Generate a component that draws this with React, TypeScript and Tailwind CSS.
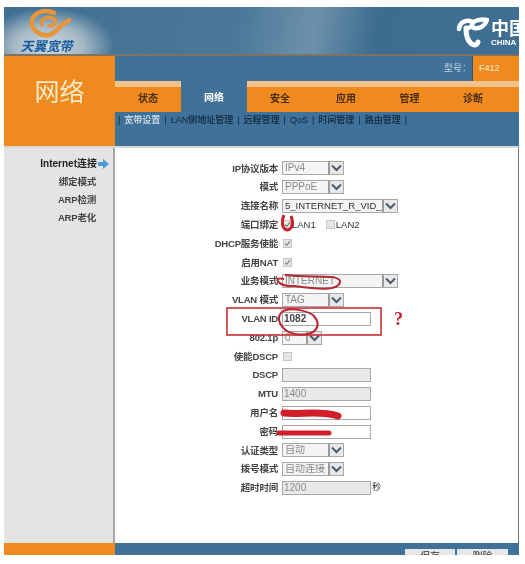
const tabs = ['状态', '网络', '安全', '应用', '管理', '诊断']
const links = ['宽带设置', 'LAN侧地址管理', '远程管理', 'QoS', '时间管理', '路由管理']

function Chevron() {
  return (
    <span className="flex h-full w-[15px] shrink-0 items-center justify-center border-l-2 border-[#9a9a9a] bg-[#e8e8e8]">
      <svg width="11" height="8" viewBox="0 0 11 8" fill="none">
        <path d="M1 1.5 5.5 6 10 1.5" stroke="#4a5a68" strokeWidth="2" />
      </svg>
    </span>
  )
}

function Select({ value, width, muted = true, small = false }: { value: string; width: string; muted?: boolean; small?: boolean }) {
  return (
    <div className={`flex h-[14px] items-center overflow-hidden border border-[#a8a8a8] bg-[#f4f4f4] ${width}`}>
      <span className={`flex-1 overflow-hidden pl-[2px] leading-none whitespace-nowrap ${small ? 'text-[9.5px]' : 'text-[10px]'} ${muted ? 'text-[#8a8a8a]' : 'text-[#333]'}`}>
        {value}
      </span>
      <Chevron />
    </div>
  )
}

function Input({ value = '', disabled = false, dark = false }: { value?: string; disabled?: boolean; dark?: boolean }) {
  return (
    <div className={`flex h-[14px] w-[89px] items-center border border-[#a8a8a8] pl-[1px] text-[10px] leading-none ${disabled ? 'bg-[#e9e9e9]' : 'bg-white'} ${dark ? 'font-bold text-[#444]' : 'text-[#8a8a8a]'}`}>
      {value}
    </div>
  )
}

function Check({ checked = true }: { checked?: boolean }) {
  return (
    <span className="flex h-[9px] w-[9px] shrink-0 items-center justify-center border border-[#c4c4c4] bg-[#e6e6e6]">
      {checked && (
        <svg width="9" height="9" viewBox="0 0 9 9" fill="none">
          <path d="M1.5 4.5 3.6 7 7.6 1.5" stroke="#6d7478" strokeWidth="1.3" />
        </svg>
      )}
    </span>
  )
}

function Row({ label, children }: { label: string; children: React.ReactNode }) {
  return (
    <div className="flex h-[18.8px] items-center">
      <div className="w-[174px] pr-[4px] text-right text-[9.5px] leading-none font-bold tracking-[-0.2px] whitespace-nowrap text-[#444]">
        {label}
      </div>
      <div className="flex items-center">{children}</div>
    </div>
  )
}

function Logo() {
  return (
    <div className="flex h-full w-[111px] flex-col items-center bg-[radial-gradient(ellipse_at_40%_85%,#cfdae0_0%,#a3b7c4_38%,transparent_70%)] pt-[2px] pr-[26px]">
      <svg className="ml-[6px]" width="42" height="29" viewBox="0 0 42 29" fill="none">
        <path
          d="M25 4C18 0 6 2 3 11 1 20 11 28 20 26 29 24 30 15 41 11"
          stroke="#e8943a"
          strokeWidth="4.5"
          strokeLinecap="round"
        />
        <path
          d="M13 16C11 10 18 7 24 9 29 11 27 17 20 17"
          stroke="#e8943a"
          strokeWidth="3.5"
          strokeLinecap="round"
        />
      </svg>
      <span className="mt-[2px] text-[13px] leading-[14px] font-bold whitespace-nowrap text-[#1a5c9e] italic">天翼宽带</span>
    </div>
  )
}

function TelecomMark() {
  return (
    <svg className="shrink-0" width="33" height="31" viewBox="0 0 33 31" fill="none" stroke="#fff" strokeLinecap="round">
      <path d="M3 12C3 6 9 3 14 4 18 5 17 10 12 11" strokeWidth="4.5" />
      <path d="M17 5C21 3 27 2 31 3 29 9 24 12 18 11" strokeWidth="4.5" />
      <path d="M10 11C10 19 12 26 18 28 20 28 22 27 22 25" strokeWidth="5" />
    </svg>
  )
}

export default function App() {
  return (
    <div className="relative h-[564px] w-[525px] overflow-hidden bg-white pt-[7px] pl-[4px] font-['Liberation_Sans','Noto_Sans_CJK_SC',sans-serif] blur-[0.4px]">
      <div className="flex h-[548px] w-[515px] flex-col">
        {/* top banner */}
        <div className="flex h-[49px] shrink-0 items-start justify-between overflow-hidden border-b-2 border-[#7d7360] bg-[linear-gradient(100deg,#3f6f93_0%,#4a7899_45%,#6d91ab_60%,#3c6c90_72%,#3f6f93_100%)]">
          <Logo />
          <div className="flex w-[63px] shrink-0 items-start gap-[2px] pt-[10px]">
            <TelecomMark />
            <div className="flex flex-col leading-none whitespace-nowrap text-white">
              <span className="mt-[3px] text-[18px] font-bold">中国</span>
              <span className="mt-[1px] text-[8px] font-bold">CHINA</span>
            </div>
          </div>
        </div>

        {/* orange title + tabs */}
        <div className="flex h-[90px] shrink-0">
          <div className="flex w-[111px] shrink-0 justify-center bg-[#ee8a1e] pt-[24px]">
            <span className="text-[25px] leading-none text-[#fcebca]">网络</span>
          </div>
          <div className="flex flex-1 flex-col bg-[#3f7199]">
            <div className="flex h-[25px] shrink-0 justify-end">
              <span className="self-center pt-[1px] pr-[1px] text-[9px] text-[#c4d3de]">型号：</span>
              <div className="flex w-[47px] items-center border-l border-[#2f5572] bg-[#ee8a1e] pl-[6px] text-[9px] font-bold text-[#f9d6a6]">
                F412
              </div>
            </div>
            <div className="flex h-[31px] shrink-0">
              {tabs.map((tab, i) => (
                <div
                  key={tab}
                  className={`flex h-full items-center justify-center pb-[3px] text-[10px] font-bold ${
                    i === 1
                      ? 'pt-[5px] text-white'
                      : 'border-t-[6px] border-[#f6c48a] bg-[#ee8a1e] text-[#4a2c10]'
                  } ${i === 5 ? 'w-[68px] flex-1 pr-[13px]' : i === 4 ? 'w-[61px]' : 'w-[66px]'}`}
                >
                  {tab}
                </div>
              ))}
            </div>
            <div className="flex h-[31px] items-start gap-[4px] pt-[1px] pl-[3px] text-[9px] leading-[14px] font-medium whitespace-nowrap text-[#10263a]">
              <span>|</span>
              {links.map((link, i) => (
                <span key={link} className="flex gap-[4px]">
                  <span className={i === 0 ? 'text-[#dbe5ec]' : ''}>{link}</span>
                  <span>|</span>
                </span>
              ))}
            </div>
          </div>
        </div>

        {/* body */}
        <div className="flex min-h-0 flex-1 border-t-2 border-r border-t-[#d8d8d8] border-r-[#6f7a82]">
          <div className="flex w-[111px] shrink-0 flex-col items-end border-r-2 border-[#a5a5a5] bg-[#e4e4e4] pt-[7px] pr-[4px] text-[9.5px] leading-[18px] font-bold tracking-[-0.2px] text-[#444]">
            <div className="flex items-center gap-[1px] text-[10px] tracking-normal text-[#222]">
              Internet连接
              <svg width="11" height="10" viewBox="0 0 11 10">
                <path d="M0 3H5V0L11 5 5 10V7H0Z" fill="#4d9bd6" />
              </svg>
            </div>
            <div className="pr-[13px]">绑定模式</div>
            <div className="pr-[13px]">ARP检测</div>
            <div className="pr-[13px]">ARP老化</div>
          </div>
          <div className="flex-1 bg-white pt-[11px]">
            <div className="-ml-[7px]">
              <Row label="IP协议版本"><Select value="IPv4" width="w-[62px]" /></Row>
              <Row label="模式"><Select value="PPPoE" width="w-[62px]" /></Row>
              <Row label="连接名称"><Select value="5_INTERNET_R_VID_1" width="w-[116px]" muted={false} small /></Row>
              <Row label="端口绑定">
                <span className="ml-[1px] flex"><Check /></span>
                <span className="text-[9.5px] text-[#333]">LAN1</span>
                <span className="ml-[10px] flex"><Check checked={false} /></span>
                <span className="ml-[1px] text-[9.5px] text-[#333]">LAN2</span>
              </Row>
              <Row label="DHCP服务使能"><span className="ml-[1px] flex"><Check /></span></Row>
              <Row label="启用NAT"><span className="ml-[1px] flex"><Check /></span></Row>
              <Row label="业务模式"><Select value="INTERNET" width="w-[116px]" /></Row>
              <Row label="VLAN 模式"><Select value="TAG" width="w-[62px]" /></Row>
              <Row label="VLAN ID"><Input value="1082" dark /></Row>
              <Row label="802.1p"><Select value="0" width="w-[40px]" /></Row>
              <Row label="使能DSCP"><span className="ml-[1px] flex"><Check checked={false} /></span></Row>
              <Row label="DSCP"><Input disabled /></Row>
              <Row label="MTU"><Input value="1400" disabled /></Row>
              <Row label="用户名"><Input /></Row>
              <Row label="密码"><Input /></Row>
              <Row label="认证类型"><Select value="自动" width="w-[62px]" /></Row>
              <Row label="拨号模式"><Select value="自动连接" width="w-[62px]" /></Row>
              <Row label="超时时间">
                <Input value="1200" disabled />
                <span className="ml-[1px] text-[9px] text-[#333]">秒</span>
              </Row>
            </div>
          </div>
        </div>

        {/* bottom bar, buttons run past the crop */}
        <div className="flex h-[12px] shrink-0 overflow-hidden">
          <div className="w-[111px] shrink-0 bg-[#ee8a1e]" />
          <div className="flex flex-1 justify-end gap-[2px] bg-[#3f7199] pt-[6px] pr-[11px]">
            <div className="h-[20px] w-[50px] bg-[#e6e9ec] text-center text-[10px] text-[#333]">保存</div>
            <div className="h-[20px] w-[51px] bg-[#e6e9ec] text-center text-[10px] text-[#333]">删除</div>
          </div>
        </div>
      </div>

      {/* red marks drawn over the screenshot */}
      <svg className="absolute inset-0" width="525" height="564" viewBox="0 0 525 564" fill="none">
        <rect x="227" y="308" width="154" height="27" stroke="#c8202a" strokeWidth="1.5" />
        <path d="M284 215C281 221 282 229 287 230 292 230 294 223 291 216" stroke="#c8202a" strokeWidth="3" />
        <path d="M284 279C272 276 277 287 295 286 315 289 340 292 340 281 338 274 312 278 285 275" stroke="#b92530" strokeWidth="2" />
        <path d="M283 311C274 318 281 331 295 334 316 337 323 326 313 315 303 309 290 308 283 311Z" stroke="#b92530" strokeWidth="2" />
        <path d="M284 413C300 415 320 410 338 416" stroke="#d11f2a" strokeWidth="7" strokeLinecap="round" />
        <path d="M279 433H329" stroke="#d11f2a" strokeWidth="5" strokeLinecap="round" />
      </svg>
      <span className="absolute top-[308px] left-[394px] font-['Liberation_Serif',serif] text-[18px] leading-[22px] font-bold text-[#c8202a]">?</span>
    </div>
  )
}
